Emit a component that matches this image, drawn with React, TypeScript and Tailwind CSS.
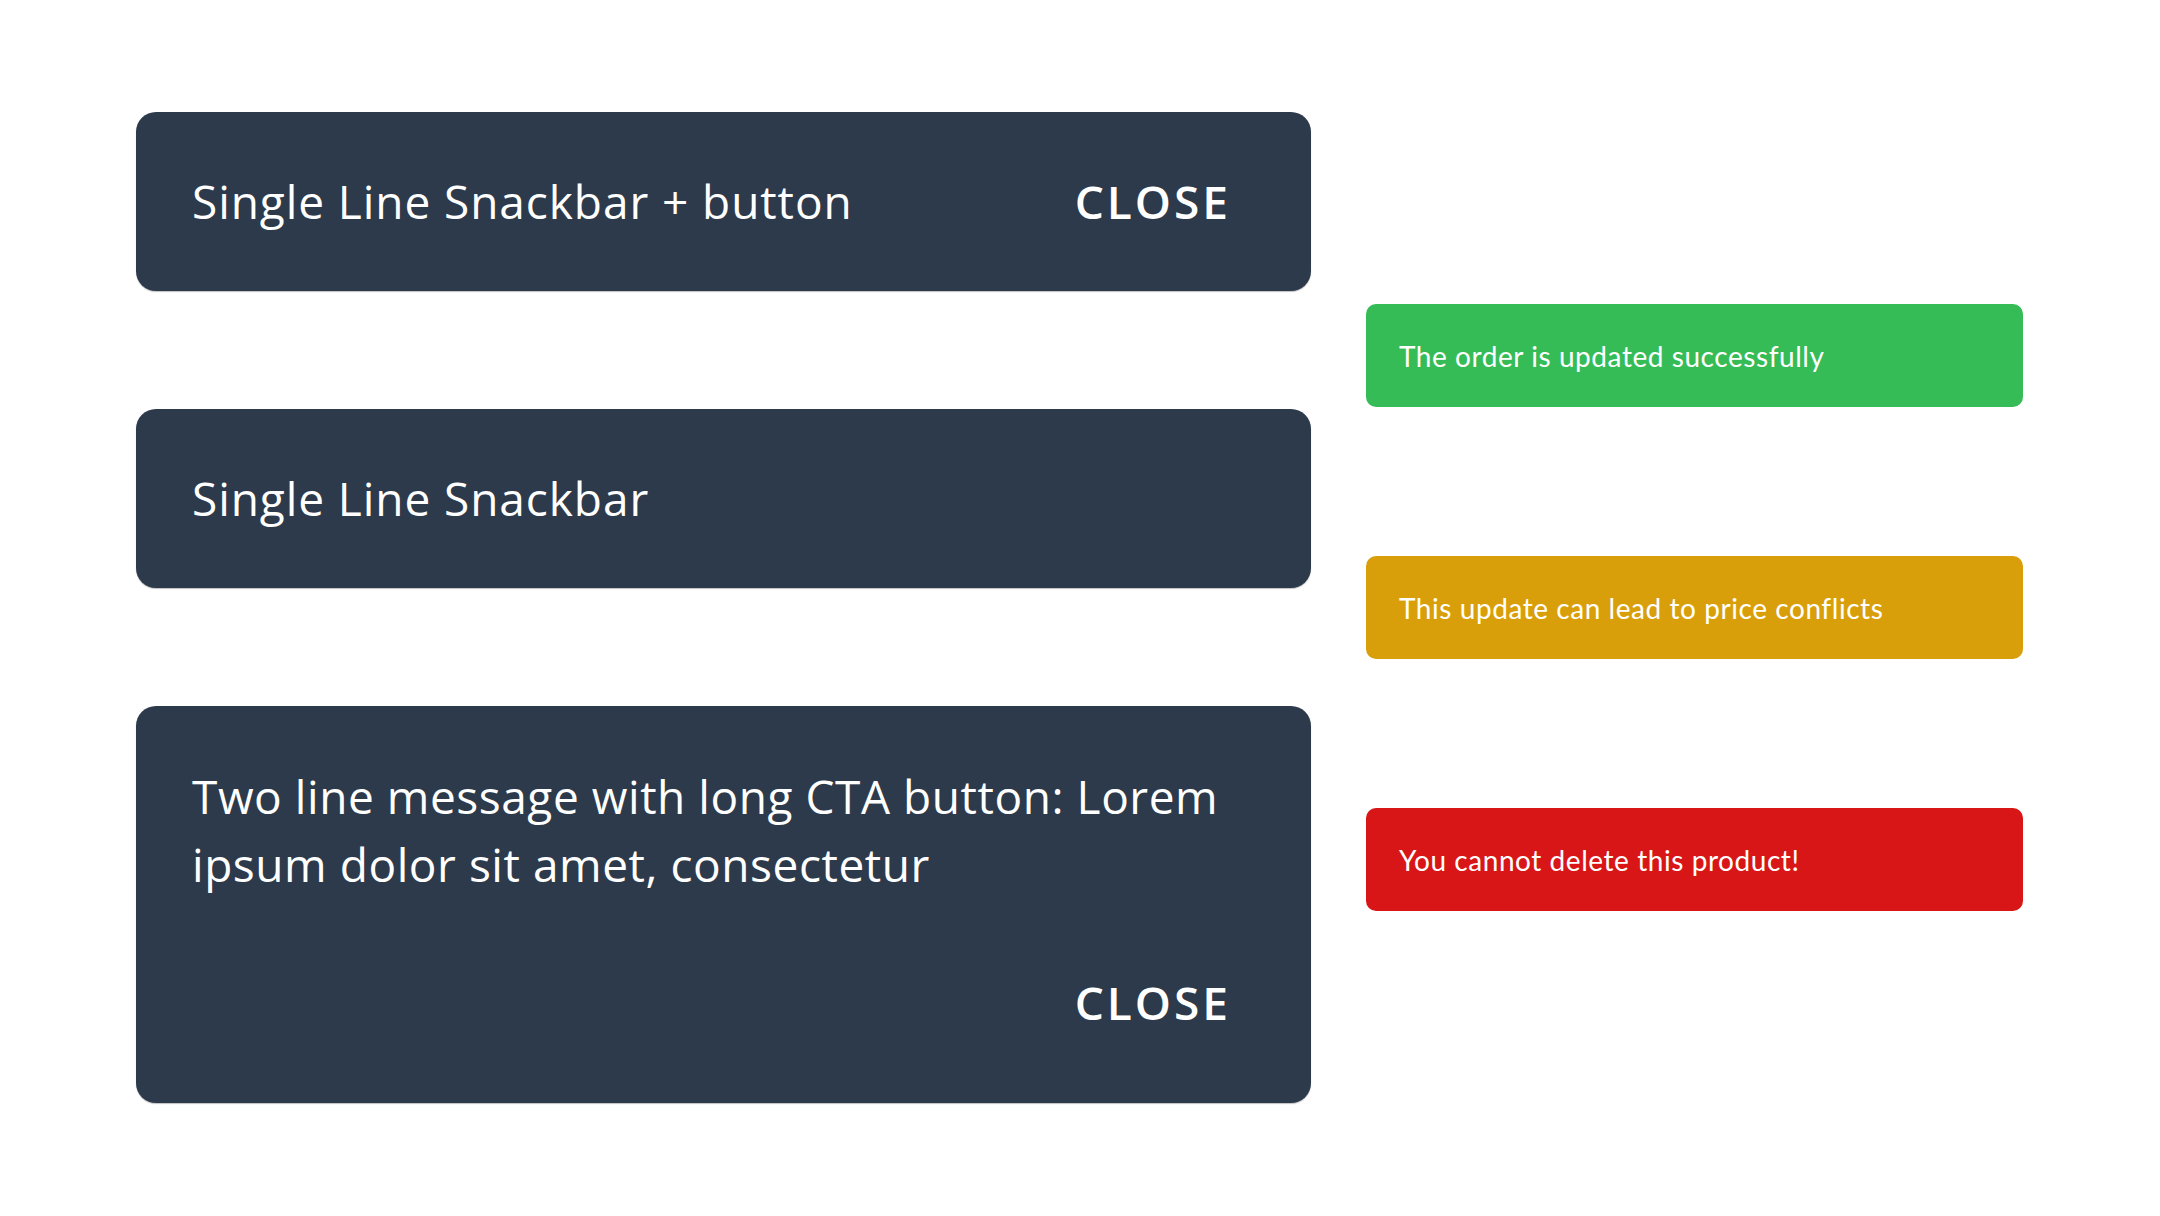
import React from "react";

// ── Snackbars ─────────────────────────────────────────────────────

function DarkSnackbar({ children }: { children: React.ReactNode }) {
  return (
    <div className="w-[1175px] rounded-[20px] bg-[#2d3a4b] text-white shadow-[0_1px_1px_rgba(0,0,0,0.25)]">
      {children}
    </div>
  );
}

function ToastBar({ color, text }: { color: string; text: string }) {
  return (
    <div
      className={`flex h-[103px] w-[657px] items-center rounded-[10px] pl-[33px] font-['Lato',sans-serif] text-[28px] tracking-[0.02em] text-white ${color}`}
    >
      {text}
    </div>
  );
}

export default function App() {
  return (
    <div className="min-h-screen w-full bg-white font-['Open_Sans','Noto_Sans',sans-serif]">
      <div className="flex gap-[55px] pl-[136px] pt-[112px]">
        {/* Left: dark snackbars */}
        <div className="flex flex-col gap-[118px]">
          <DarkSnackbar>
            <div className="flex h-[179px] items-center justify-between pl-[56px] pr-[80px]">
              <span className="text-[46px] tracking-[0.02em]">Single Line Snackbar + button</span>
              <span className="text-[46px] font-semibold tracking-[0.065em]">CLOSE</span>
            </div>
          </DarkSnackbar>

          <DarkSnackbar>
            <div className="flex h-[179px] items-center pl-[56px]">
              <span className="text-[46px] tracking-[0.02em]">Single Line Snackbar</span>
            </div>
          </DarkSnackbar>

          <DarkSnackbar>
            <div className="flex h-[397px] flex-col justify-between pb-[67px] pl-[56px] pr-[80px] pt-[56px]">
              <p className="max-w-[1060px] text-[46px] leading-[68px] tracking-[0.012em]">
                Two line message with long CTA button: Lorem ipsum dolor sit amet, consectetur
              </p>
              <div className="flex justify-end">
                <span className="text-[46px] font-semibold leading-[68px] tracking-[0.065em]">CLOSE</span>
              </div>
            </div>
          </DarkSnackbar>
        </div>

        {/* Right: status toasts */}
        <div className="flex flex-col gap-[149px] pt-[192px]">
          <ToastBar color="bg-[#35bc57]" text="The order is updated successfully" />
          <ToastBar color="bg-[#d99f0a]" text="This update can lead to price conflicts" />
          <ToastBar color="bg-[#d91617]" text="You cannot delete this product!" />
        </div>
      </div>
    </div>
  );
}
